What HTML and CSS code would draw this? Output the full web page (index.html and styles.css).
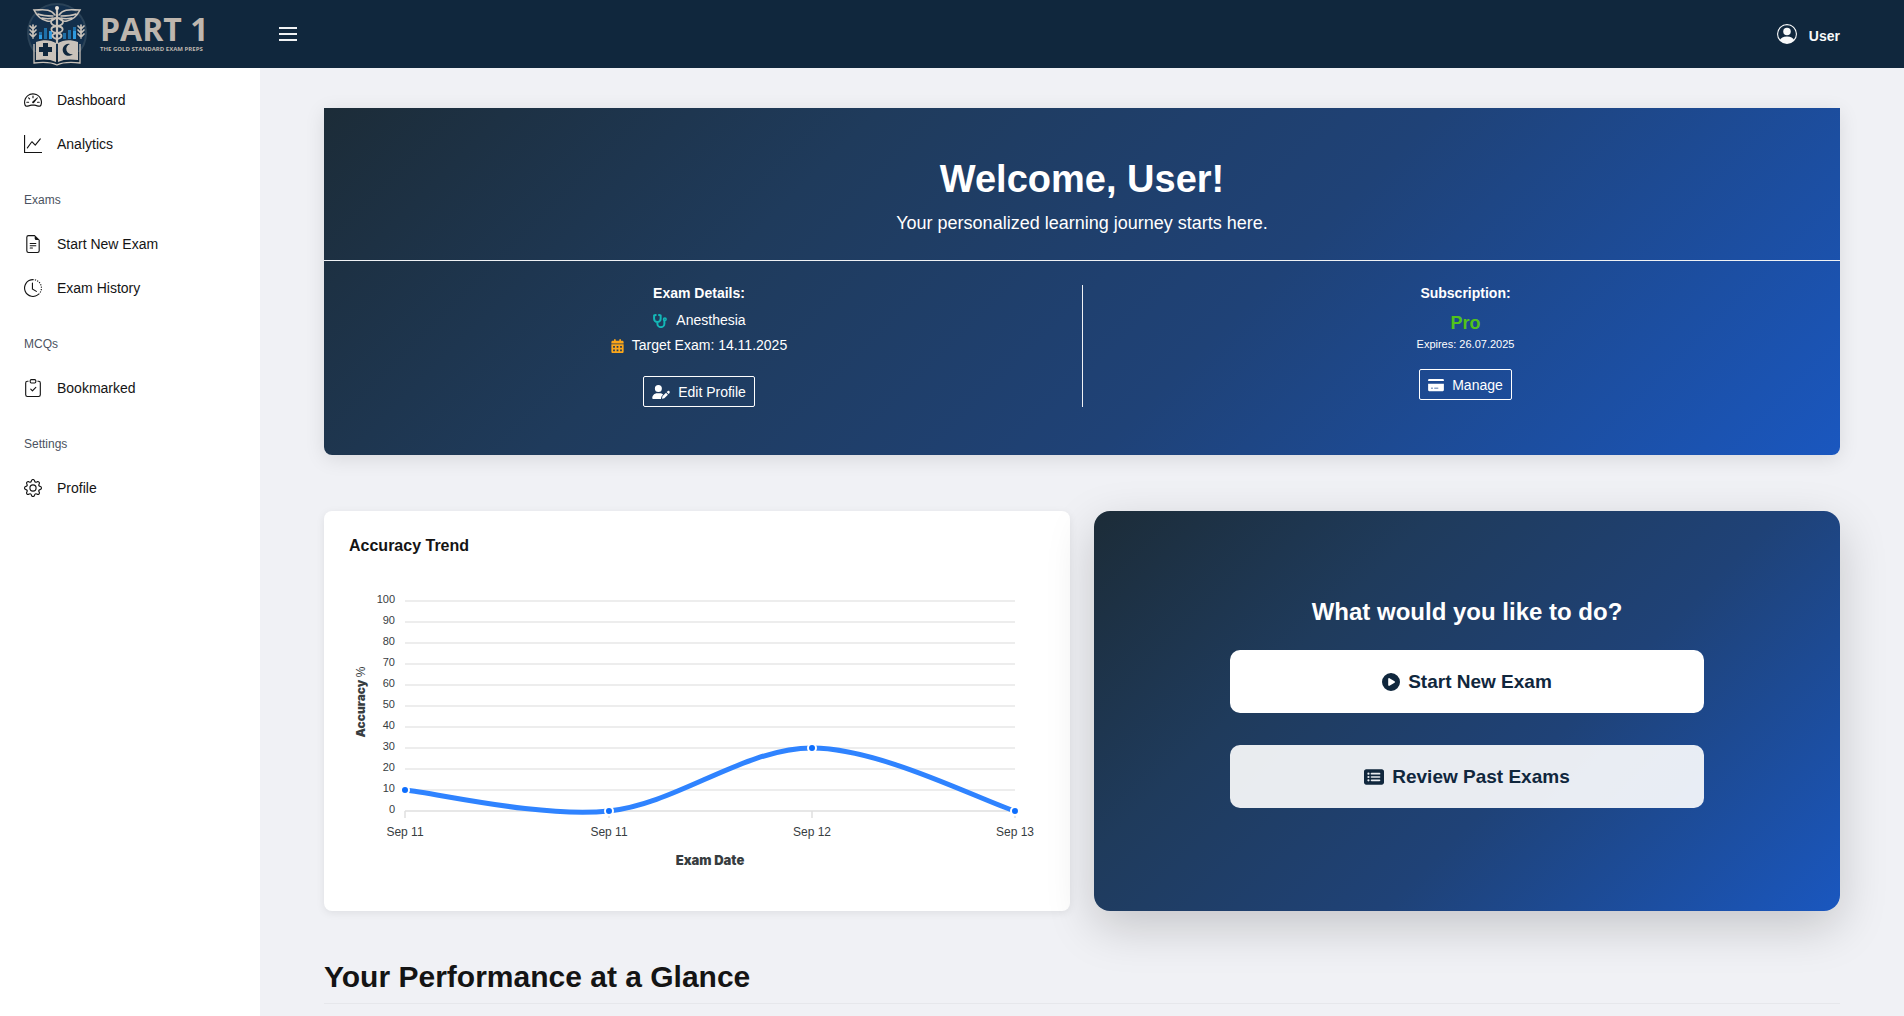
FILE: index.html
```html
<!DOCTYPE html>
<html lang="en">
<head>
<meta charset="utf-8">
<meta name="viewport" content="width=device-width, initial-scale=1">
<title>Part 1 – Dashboard</title>
<link rel="stylesheet" href="styles.css">
</head>
<body>
<header class="topbar">
  <a class="brand" href="#" aria-label="Part 1 home">
    <svg class="brand-mark" viewBox="0 0 64 64" aria-hidden="true">
      <circle cx="32" cy="31" r="29" fill="#132f4c" stroke="#2a4257" stroke-width="2"/>
      <path d="M8 50h48v12H8z" fill="#10273d"/>
      <g fill="#1f6fa8"><path d="M14 30h3v7h-3zM19 26h3v11h-3zM38 31h3v6h-3zM43 28h3v9h-3zM48 25h3v12h-3z"/></g>
      <g fill="#2f9be0"><path d="M14 33h3v4h-3zM24 29h3v8h-3zM48 29h3v8h-3z"/></g>
      <g fill="none" stroke="#c9c2ba" stroke-linecap="round">
        <path d="M30 13C25 6 18 8 9 8c3 6 8 10 13 11 4 1 7-1 8-3M13 12c5 2 10 2 15 2M17 16c4 1 8 1 11 0M34 13c5-7 12-5 21-5-3 6-8 10-13 11-4 1-7-1-8-3M51 12c-5 2-10 2-15 2M47 16c-4 1-8 1-11 0" stroke-width="1.6"/>
        <path d="M32 7v34" stroke-width="2.2"/>
        <path d="M32 16c-8 1-8 7 0 8s7 6 0 7-5 5 0 6M32 16c8 1 8 7 0 8s-7 6 0 7 5 5 0 6" stroke-width="1.8"/>
        <path d="M8 23v13M5 24l3 3 3-3M5 28l3 3 3-3M5 32l3 3 3-3M56 23v13M53 24l3 3 3-3M53 28l3 3 3-3M53 32l3 3 3-3" stroke-width="1.7"/>
      </g>
      <circle cx="32" cy="6" r="2" fill="#e8e2da"/>
      <path d="M11 40c8-3 15-2 20 1v19c-6-3-12-3-20-2zM53 40c-8-3-15-2-20 1v19c6-3 12-3 20-2z" fill="#c9c2ba"/>
      <path d="M9 42v19c9-1 17-1 23 2 6-3 14-3 23-2V42" fill="none" stroke="#c9c2ba" stroke-width="1.3"/>
      <path d="M18 41h5v4h4v5h-4v4h-5v-4h-4v-5h4zM45 42a6 6 0 1 0 3 10 5 5 0 1 1-3-10z" fill="#10273d"/>
    </svg>
    <span class="brand-text"><span class="brand-name">PART 1</span><span class="brand-tag">THE GOLD STANDARD EXAM PREPS</span></span>
  </a>
  <button class="menu-toggle" type="button" aria-label="Toggle menu"><span></span><span></span><span></span></button>
  <a class="user" href="#">
    <svg viewBox="0 0 16 16" fill="currentColor" aria-hidden="true"><path d="M11 6a3 3 0 1 1-6 0 3 3 0 0 1 6 0"/><path fill-rule="evenodd" d="M0 8a8 8 0 1 1 16 0A8 8 0 0 1 0 8m8-7a7 7 0 0 0-5.468 11.37C3.242 11.226 4.805 10 8 10s4.757 1.225 5.468 2.37A7 7 0 0 0 8 1"/></svg>
    <span>User</span>
  </a>
</header>
<div class="shell">
  <nav class="sidebar" aria-label="Main">
    <a href="#"><svg viewBox="0 0 16 16"><path d="M8 4a.5.5 0 0 1 .5.5V6a.5.5 0 0 1-1 0V4.500A.5.5 0 0 1 8 4M3.732 5.732a.5.5 0 0 1 .707 0l.915.914a.5.5 0 1 1-.708.708l-.914-.915a.5.5 0 0 1 0-.707M2 10a.5.5 0 0 1 .5-.5h1.586a.5.5 0 0 1 0 1H2.500A.5.5 0 0 1 2 10m9.500 0a.5.5 0 0 1 .5-.5h1.500a.5.5 0 0 1 0 1H12a.5.5 0 0 1-.5-.5m.754-4.246a.39.39 0 0 0-.527-.02L7.547 9.310a.91.91 0 1 0 1.302 1.258l3.434-4.297a.39.39 0 0 0-.029-.518z"/><path fill-rule="evenodd" d="M0 10a8 8 0 1 1 15.547 2.661c-.442 1.253-1.845 1.602-2.932 1.250C11.309 13.488 9.475 13 8 13c-1.474 0-3.310.488-4.615.911-1.087.352-2.490.003-2.932-1.250A8 8 0 0 1 0 10m8-7a7 7 0 0 0-6.603 9.329c.203.575.923.876 1.680.63C4.397 12.533 6.358 12 8 12s3.604.532 4.923.96c.757.245 1.477-.056 1.680-.631A7 7 0 0 0 8 3"/></svg>Dashboard</a>
    <a href="#"><svg viewBox="0 0 16 16"><path fill-rule="evenodd" d="M0 0h1v15h15v1H0zm14.817 3.113a.5.5 0 0 1 .07.704l-4.500 5.500a.5.5 0 0 1-.74.037L7.060 6.767l-3.656 5.027a.5.5 0 0 1-.808-.588l4-5.500a.5.5 0 0 1 .758-.06l2.609 2.610 4.150-5.073a.5.5 0 0 1 .704-.07"/></svg>Analytics</a>
    <h2>Exams</h2>
    <a href="#"><svg viewBox="0 0 16 16"><path d="M5.500 7a.5.5 0 0 0 0 1h5a.5.5 0 0 0 0-1zM5 9.500a.5.5 0 0 1 .5-.5h5a.5.5 0 0 1 0 1h-5a.5.5 0 0 1-.5-.5m0 2a.5.5 0 0 1 .5-.5h2a.5.5 0 0 1 0 1h-2a.5.5 0 0 1-.5-.5"/><path d="M9.500 0H4a2 2 0 0 0-2 2v12a2 2 0 0 0 2 2h8a2 2 0 0 0 2-2V4.500zm0 1v2A1.500 1.500 0 0 0 11 4.500h2V14a1 1 0 0 1-1 1H4a1 1 0 0 1-1-1V2a1 1 0 0 1 1-1z"/></svg>Start New Exam</a>
    <a href="#"><svg viewBox="0 0 16 16"><path d="M8.515 1.019A7 7 0 0 0 8 1V0a8 8 0 0 1 .589.022zm2.004.45a7 7 0 0 0-.985-.299l.219-.976q.576.129 1.126.342zm1.370.71a7 7 0 0 0-.439-.27l.493-.87a8 8 0 0 1 .979.654l-.615.789a7 7 0 0 0-.418-.302zm1.834 1.790a7 7 0 0 0-.653-.796l.724-.69q.406.429.747.91zm.744 1.352a7 7 0 0 0-.214-.468l.893-.45a8 8 0 0 1 .45 1.088l-.95.313a7 7 0 0 0-.179-.483m.53 2.507a7 7 0 0 0-.1-1.025l.985-.17q.1.58.116 1.170zm-.131 1.538q.05-.254.081-.51l.993.123a8 8 0 0 1-.23 1.155l-.964-.267q.069-.247.12-.501m-.952 2.379q.276-.436.486-.908l.914.405q-.24.54-.555 1.038zm-.964 1.205q.183-.183.35-.378l.758.653a8 8 0 0 1-.401.432z"/><path d="M8 1a7 7 0 1 0 4.950 11.950l.707.707A8.001 8.001 0 1 1 8 0z"/><path d="M7.500 3a.5.5 0 0 1 .5.5v5.210l3.248 1.856a.5.5 0 0 1-.496.868l-3.500-2A.5.5 0 0 1 7 9V3.500a.5.5 0 0 1 .5-.5"/></svg>Exam History</a>
    <h2>MCQs</h2>
    <a href="#"><svg viewBox="0 0 16 16"><path fill-rule="evenodd" d="M10.854 7.146a.5.5 0 0 1 0 .708l-3 3a.5.5 0 0 1-.708 0l-1.500-1.500a.5.5 0 1 1 .708-.708L7.500 9.793l2.646-2.647a.5.5 0 0 1 .708 0"/><path d="M4 1.500H3a2 2 0 0 0-2 2V14a2 2 0 0 0 2 2h10a2 2 0 0 0 2-2V3.500a2 2 0 0 0-2-2h-1v1h1a1 1 0 0 1 1 1V14a1 1 0 0 1-1 1H3a1 1 0 0 1-1-1V3.500a1 1 0 0 1 1-1h1z"/><path d="M9.500 1a.5.5 0 0 1 .5.5v1a.5.5 0 0 1-.5.5h-3a.5.5 0 0 1-.5-.5v-1a.5.5 0 0 1 .5-.5zm-3-1A1.500 1.500 0 0 0 5 1.500v1A1.500 1.500 0 0 0 6.500 4h3A1.500 1.500 0 0 0 11 2.500v-1A1.500 1.500 0 0 0 9.500 0z"/></svg>Bookmarked</a>
    <h2>Settings</h2>
    <a href="#"><svg viewBox="0 0 16 16"><path d="M8 4.754a3.246 3.246 0 1 0 0 6.492 3.246 3.246 0 0 0 0-6.492M5.754 8a2.246 2.246 0 1 1 4.492 0 2.246 2.246 0 0 1-4.492 0"/><path d="M9.796 1.343c-.527-1.790-3.065-1.790-3.592 0l-.094.319a.873.873 0 0 1-1.255.52l-.292-.16c-1.640-.892-3.433.902-2.540 2.541l.159.292a.873.873 0 0 1-.52 1.255l-.319.094c-1.790.527-1.790 3.065 0 3.592l.319.094a.873.873 0 0 1 .52 1.255l-.16.292c-.892 1.640.901 3.434 2.541 2.540l.292-.159a.873.873 0 0 1 1.255.52l.094.319c.527 1.790 3.065 1.790 3.592 0l.094-.319a.873.873 0 0 1 1.255-.52l.292.16c1.640.893 3.434-.902 2.540-2.541l-.159-.292a.873.873 0 0 1 .52-1.255l.319-.094c1.790-.527 1.790-3.065 0-3.592l-.319-.094a.873.873 0 0 1-.52-1.255l.16-.292c.893-1.640-.902-3.433-2.541-2.540l-.292.159a.873.873 0 0 1-1.255-.52zm-2.633.283c.246-.835 1.428-.835 1.674 0l.094.319a1.873 1.873 0 0 0 2.693 1.115l.291-.16c.764-.415 1.600.42 1.184 1.185l-.159.292a1.873 1.873 0 0 0 1.116 2.692l.318.094c.835.246.835 1.428 0 1.674l-.319.094a1.873 1.873 0 0 0-1.115 2.693l.16.291c.415.764-.42 1.600-1.185 1.184l-.291-.159a1.873 1.873 0 0 0-2.693 1.116l-.094.318c-.246.835-1.428.835-1.674 0l-.094-.319a1.873 1.873 0 0 0-2.692-1.115l-.292.16c-.764.415-1.600-.42-1.184-1.185l.159-.291A1.873 1.873 0 0 0 1.945 8.930l-.319-.094c-.835-.246-.835-1.428 0-1.674l.319-.094A1.873 1.873 0 0 0 3.060 4.377l-.16-.292c-.415-.764.42-1.600 1.185-1.184l.292.159a1.873 1.873 0 0 0 2.692-1.115z"/></svg>Profile</a>
  </nav>
  <main class="content">
    <section class="hero">
      <div class="hero-head">
        <h1>Welcome, User!</h1>
        <p>Your personalized learning journey starts here.</p>
      </div>
      <div class="hero-cols">
        <div class="hero-col">
          <h2>Exam Details:</h2>
          <p class="detail"><svg class="teal" width="16" height="14" viewBox="0 0 576 512" aria-hidden="true"><g fill="none" stroke="currentColor" stroke-width="72" stroke-linecap="round" stroke-linejoin="round"><path d="M132 36 72 56v120a120 120 0 0 0 240 0V56l-60-20M192 300v52a128 128 0 0 0 256 0V240"/><circle cx="464" cy="192" r="48" stroke-width="56"/></g></svg>Anesthesia</p>
          <p class="detail"><svg class="amber" width="13" height="14" viewBox="0 0 448 512" fill="currentColor" aria-hidden="true"><path fill-rule="evenodd" d="M128 0c18 0 32 14 32 32v32h128V32c0-18 14-32 32-32s32 14 32 32v32h48c27 0 48 21 48 48v48H0v-48c0-27 21-48 48-48h48V32c0-18 14-32 32-32zM0 192h448v272c0 27-21 48-48 48H48c-27 0-48-21-48-48V192zm64 64v64h64v-64H64zm128 0v64h64v-64h-64zm128 0v64h64v-64h-64zM64 384v64h64v-64H64zm128 0v64h64v-64h-64zm128 0v64h64v-64h-64z"/></svg>Target Exam: 14.11.2025</p>
          <button class="outline-btn" type="button"><svg width="18" height="14" viewBox="0 0 640 512" fill="currentColor" aria-hidden="true"><path d="M224 256a128 128 0 1 0 0-256 128 128 0 0 0 0 256zm-46 48C80 304 0 384 0 482c0 17 13 30 30 30h293c-3-8-4-17-2-26l15-60c3-14 11-27 21-37l40-40c-32-28-75-45-121-45h-98zM549 236l-24 24 71 71 24-24c27-27 27-61 8-80-20-19-52-18-79 9zM503 282 380 405c-4 4-7 9-8 15l-15 60c-1 5 0 11 4 15s10 6 15 4l60-15c6-1 11-4 15-8l123-123-71-71z"/></svg>Edit Profile</button>
        </div>
        <div class="hero-col">
          <h2>Subscription:</h2>
          <p class="plan">Pro</p>
          <p class="expires">Expires: 26.07.2025</p>
          <button class="outline-btn" type="button"><svg width="16" height="14" viewBox="0 0 576 512" fill="currentColor" aria-hidden="true"><path fill-rule="evenodd" d="M40 32h496c22 0 40 18 40 40v40H0V72c0-22 18-40 40-40zM0 208h576v232c0 22-18 40-40 40H40c-22 0-40-18-40-40V208zm104 144v34h72v-34h-72zm120 0v34h148v-34H224z"/></svg>Manage</button>
        </div>
      </div>
    </section>
    <div class="panels">
      <section class="card">
        <h2>Accuracy Trend</h2>
        <svg class="chart" viewBox="0 0 696 300" role="img" aria-label="Accuracy percentage by exam date">
          <path d="M56 26H666M56 47H666M56 68H666M56 89H666M56 110H666M56 131H666M56 152H666M56 173H666M56 194H666M56 215H666" stroke="#e8e8e8" stroke-width="1.500"/>
          <path d="M56 236H666M56 236v7M260 236v7M463 236v7M666 236v7" stroke="#e0e0e0" stroke-width="1.500"/>
          <g class="y-labels"><text x="46" y="28">100</text><text x="46" y="49">90</text><text x="46" y="70">80</text><text x="46" y="91">70</text><text x="46" y="112">60</text><text x="46" y="133">50</text><text x="46" y="154">40</text><text x="46" y="175">30</text><text x="46" y="196">20</text><text x="46" y="217">10</text><text x="46" y="238">0</text></g>
          <path d="M56 215C90 218.500 192 243 260 236S395 173 463 173C531 173 632 225.500 666 236" fill="none" stroke="#2f83ff" stroke-width="5"/>
          <g fill="#0d6efd" stroke="#fff" stroke-width="2"><circle cx="56" cy="215" r="4"/><circle cx="260" cy="236" r="4"/><circle cx="463" cy="173" r="4"/><circle cx="666" cy="236" r="4"/></g>
          <g class="x-labels"><text x="56" y="261">Sep 11</text><text x="260" y="261">Sep 11</text><text x="463" y="261">Sep 12</text><text x="666" y="261">Sep 13</text></g>
          <text class="axis-title" x="361" y="290">Exam Date</text>
          <text class="axis-title y-title" transform="translate(16 127) rotate(-90)">Accuracy <tspan class="unit">%</tspan></text>
        </svg>
      </section>
      <section class="actions">
        <h2>What would you like to do?</h2>
        <button class="action" type="button"><svg width="18" height="18" viewBox="0 0 512 512" fill="currentColor" aria-hidden="true"><path fill-rule="evenodd" d="M0 256a256 256 0 1 1 512 0 256 256 0 1 1-512 0zM188 147c-8 4-12 12-12 21v176c0 9 5 17 12 21 8 4 17 4 25 0l144-88c7-4 11-12 11-21s-4-16-11-20L213 148c-7-5-17-5-25-1z"/></svg>Start New Exam</button>
        <button class="action muted" type="button"><svg width="20" height="18" viewBox="0 0 576 512" fill="currentColor" aria-hidden="true"><path fill-rule="evenodd" d="M0 96c0-35 29-64 64-64h448c35 0 64 29 64 64v320c0 35-29 64-64 64H64c-35 0-64-29-64-64V96zm96 64a32 32 0 1 0 64 0 32 32 0 0 0-64 0zm0 96a32 32 0 1 0 64 0 32 32 0 0 0-64 0zm0 96a32 32 0 1 0 64 0 32 32 0 0 0-64 0zM216 136a24 24 0 0 0 0 48h232a24 24 0 0 0 0-48H216zm0 96a24 24 0 0 0 0 48h232a24 24 0 0 0 0-48H216zm0 96a24 24 0 0 0 0 48h232a24 24 0 0 0 0-48H216z"/></svg>Review Past Exams</button>
      </section>
    </div>
    <h2 class="section-title">Your Performance at a Glance</h2>
  </main>
</div>
</body>
</html>
```
FILE: styles.css
```css
* { box-sizing: border-box; }

html { background: #f0f1f5; }

body {
  margin: 0;
  min-height: 100vh;
  display: flex;
  flex-direction: column;
  font: 14px/20px "Liberation Sans", Arial, sans-serif;
  color: #141414;
}

h1, h2, p { margin: 0; }

a { color: inherit; text-decoration: none; }

button { font: inherit; cursor: pointer; }

.topbar {
  display: flex;
  align-items: center;
  height: 68px;
  padding: 0 64px 0 25px;
  background: #10273d;
  color: #f8f9fa;
}

.brand {
  display: flex;
  align-items: center;
  gap: 11px;
  width: 254px;
}

.brand-mark { width: 64px; height: 64px; }

.brand-text {
  display: flex;
  flex-direction: column;
  padding-bottom: 2px;
  color: #beb6ae;
  font-family: "Open Sans", "Noto Sans", sans-serif;
  font-weight: 700;
  white-space: nowrap;
}

.brand-name { font-size: 32px; line-height: 32px; }

.brand-tag { font-size: 6px; line-height: 8px; }

.menu-toggle {
  display: flex;
  flex-direction: column;
  gap: 4px;
  padding: 0;
  border: 0;
  background: none;
}

.menu-toggle span { width: 18px; height: 2px; background: #f0f2f4; }

.user {
  display: flex;
  align-items: center;
  gap: 12px;
  margin-left: auto;
  font-weight: 700;
}

.user svg { width: 20px; height: 20px; }

.user span { padding-top: 4px; }

.shell { display: flex; flex: 1; }

.sidebar {
  flex: 0 0 260px;
  padding: 10px 24px;
  background: #fff;
}

.sidebar a {
  display: flex;
  align-items: center;
  gap: 15px;
  height: 44px;
}

.sidebar svg { width: 18px; height: 18px; fill: #141414; }

.sidebar h2 {
  padding: 24px 0 12px;
  font-size: 12px;
  line-height: 20px;
  font-weight: 400;
  color: #4b5260;
}

.content {
  flex: 1;
  min-width: 0;
  padding: 40px 64px 0;
  background: #f0f1f5;
}

.hero, .actions {
  background: linear-gradient(135deg, #1c2c38 0%, #1f3b5c 30%, #1f4277 60%, #1a57bf 100%);
  color: #fff;
}

.hero {
  border-radius: 0 0 8px 8px;
  box-shadow: 0 4px 20px rgba(0, 0, 0, 0.1);
  text-align: center;
  padding-bottom: 48px;
}

.hero-head {
  padding: 48px 24px 23px;
  border-bottom: 1px solid #f0f2f5;
}

.hero h1 { font-size: 38px; line-height: 46px; }

.hero-head p { margin-top: 7px; font-size: 18px; line-height: 28px; }

.hero-cols {
  display: grid;
  grid-template-columns: 1fr 1fr;
  margin: 24px -8px 0;
}

.hero-col {
  display: flex;
  flex-direction: column;
  align-items: center;
  min-height: 122px;
}

.hero-col + .hero-col { border-left: 1px solid #f0f2f5; }

.hero-col h2 { margin-bottom: 7px; font-size: 14px; line-height: 16px; }

.detail {
  display: flex;
  align-items: center;
  gap: 8px;
  line-height: 25px;
}

.teal { color: #14b8b8; }

.amber { color: #faa61a; }

.plan { font-size: 18px; line-height: 30px; font-weight: 700; color: #52c41a; }

.expires { font-size: 11px; line-height: 13px; }

.outline-btn {
  display: flex;
  align-items: center;
  gap: 8px;
  height: 31px;
  margin-top: 18px;
  padding: 0 8px;
  border: 1px solid #fff;
  border-radius: 2px;
  background: none;
  color: #fff;
}

.panels {
  display: grid;
  grid-template-columns: 1fr 1fr;
  gap: 24px;
  margin-top: 56px;
}

.card {
  padding: 25px 25px 36px;
  border-radius: 8px;
  background: #fff;
  box-shadow: 0 2px 8px rgba(0, 0, 0, 0.08);
}

.card h2 { margin-bottom: 19px; font-size: 16px; line-height: 20px; }

.chart { display: block; width: 100%; fill: #373d3f; }

.y-labels { font-size: 11px; text-anchor: end; }

.x-labels { font-size: 12px; text-anchor: middle; }

.axis-title {
  font-family: Inter, "Liberation Sans", sans-serif;
  font-size: 13px;
  font-weight: 900;
  text-anchor: middle;
}

.y-title { font-size: 12px; }

.unit { font-family: "Liberation Sans", Arial, sans-serif; font-weight: 400; }

.actions {
  display: flex;
  flex-direction: column;
  align-items: center;
  justify-content: center;
  padding-bottom: 17px;
  border-radius: 16px;
  box-shadow: 0 16px 48px rgba(0, 0, 0, 0.18);
}

.actions h2 { margin-bottom: 23px; font-size: 24px; line-height: 30px; }

.action {
  display: flex;
  align-items: center;
  justify-content: center;
  gap: 8px;
  width: calc(66.67% - 24px);
  height: 63px;
  border: 0;
  border-radius: 10px;
  background: #fff;
  color: #10273d;
  font-size: 19px;
  font-weight: 700;
}

.action.muted { margin-top: 32px; background: rgba(255, 255, 255, 0.9); }

.section-title {
  margin-top: 44px;
  padding-bottom: 4px;
  border-bottom: 1px solid #e6e7eb;
  font-size: 30px;
  line-height: 44px;
}
```
